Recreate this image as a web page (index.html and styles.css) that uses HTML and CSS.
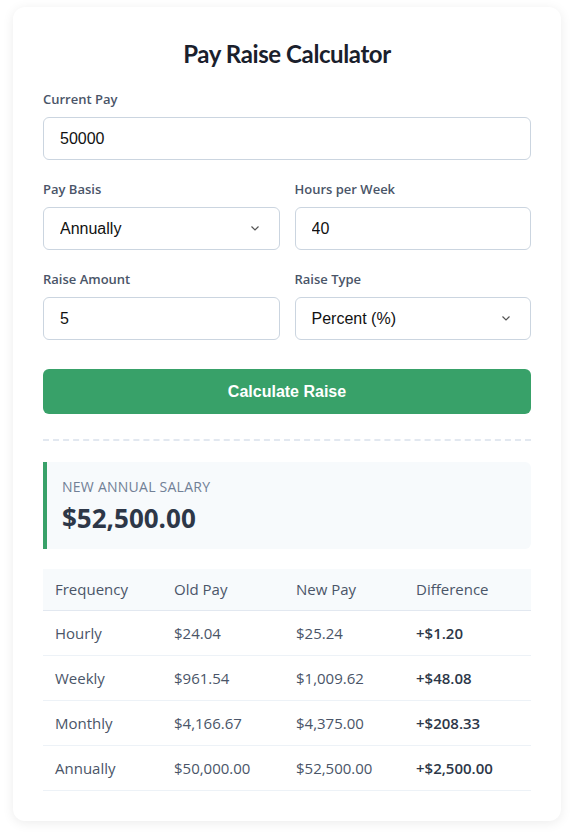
FILE: index.html
```html
<!DOCTYPE html>
<html lang="en">
<head>
<meta charset="utf-8">
<title>Pay Raise Calculator</title>
<link rel="stylesheet" href="styles.css">
</head>
<body>
<main class="card">
  <h1 class="title">Pay Raise Calculator</h1>

  <div class="field">
    <label class="label" for="pay">Current Pay</label>
    <input class="control" id="pay" type="text" value="50000">
  </div>

  <div class="row">
    <div class="field">
      <label class="label" for="basis">Pay Basis</label>
      <div class="select-wrap">
        <select class="control select" id="basis">
          <option>Annually</option>
        </select>
        <svg class="chevron" width="8" height="5" viewBox="0 0 8 5"><path d="M0.5 0.5 L4 4 L7.5 0.5" fill="none" stroke="#555" stroke-width="1.2"/></svg>
      </div>
    </div>
    <div class="field">
      <label class="label" for="hours">Hours per Week</label>
      <input class="control" id="hours" type="text" value="40">
    </div>
  </div>

  <div class="row">
    <div class="field">
      <label class="label" for="raise">Raise Amount</label>
      <input class="control" id="raise" type="text" value="5">
    </div>
    <div class="field">
      <label class="label" for="type">Raise Type</label>
      <div class="select-wrap">
        <select class="control select" id="type">
          <option>Percent (%)</option>
        </select>
        <svg class="chevron" width="8" height="5" viewBox="0 0 8 5"><path d="M0.5 0.5 L4 4 L7.5 0.5" fill="none" stroke="#555" stroke-width="1.2"/></svg>
      </div>
    </div>
  </div>

  <button class="btn" type="button">Calculate Raise</button>

  <section class="results">
    <div class="summary">
      <div class="summary-label">New Annual Salary</div>
      <div class="summary-value">$52,500.00</div>
    </div>

    <table class="breakdown">
      <colgroup>
        <col class="col-freq">
        <col class="col-old">
        <col class="col-new">
        <col>
      </colgroup>
      <thead>
        <tr><th>Frequency</th><th>Old Pay</th><th>New Pay</th><th>Difference</th></tr>
      </thead>
      <tbody>
        <tr><td>Hourly</td><td>$24.04</td><td>$25.24</td><td class="diff">+$1.20</td></tr>
        <tr><td>Weekly</td><td>$961.54</td><td>$1,009.62</td><td class="diff">+$48.08</td></tr>
        <tr><td>Monthly</td><td>$4,166.67</td><td>$4,375.00</td><td class="diff">+$208.33</td></tr>
        <tr><td>Annually</td><td>$50,000.00</td><td>$52,500.00</td><td class="diff">+$2,500.00</td></tr>
      </tbody>
    </table>
  </section>
</main>
</body>
</html>
```

FILE: styles.css
```css
* {
  box-sizing: border-box;
}

body {
  margin: 0;
  padding: 7px 15px 15px 13px;
  background: #ffffff;
  font-family: "Open Sans", "Noto Sans", sans-serif;
  color: #2d3748;
}

.card {
  width: 548px;
  background: #fff;
  border-radius: 12px;
  box-shadow: 0 2px 12px rgba(0, 0, 0, 0.08);
  padding: 30px;
}

.title {
  margin: 0 0 20px;
  text-align: center;
  font-family: Lato, "Open Sans", sans-serif;
  font-size: 24px;
  line-height: 33px;
  font-weight: 700;
  letter-spacing: -0.4px;
  color: #1a202c;
}

.field {
  margin-bottom: 20px;
  min-width: 0;
}

.label {
  display: block;
  font-size: 13px;
  line-height: 18px;
  font-weight: 600;
  color: #4a5568;
  margin-bottom: 9px;
}

.row {
  display: grid;
  grid-template-columns: 1fr 1fr;
  column-gap: 15px;
}

.control {
  display: block;
  width: 100%;
  height: 43px;
  padding: 0 16px;
  border: 1px solid #cbd5e0;
  border-radius: 6px;
  background: #fff;
  font-family: "Liberation Sans", Arial, sans-serif;
  font-size: 16px;
  color: #111;
}

.select-wrap {
  position: relative;
}

.select {
  appearance: none;
  -webkit-appearance: none;
}

.chevron {
  position: absolute;
  right: 21px;
  top: 19px;
  pointer-events: none;
}

.btn {
  display: block;
  width: 100%;
  height: 45px;
  margin-top: 9px;
  border: 0;
  border-radius: 6px;
  background: #38a169;
  color: #fff;
  font-family: "Liberation Sans", Arial, sans-serif;
  font-size: 16px;
  font-weight: 700;
}

.results {
  margin-top: 25px;
  border-top: 2px dashed #e2e8f0;
  padding-top: 21px;
}

.summary {
  background: #f7fafc;
  border-left: 4px solid #38a169;
  border-radius: 0 6px 6px 0;
  padding: 15px;
  margin-bottom: 20px;
}

.summary-label {
  font-size: 14px;
  line-height: 20px;
  letter-spacing: 0.25px;
  text-transform: uppercase;
  color: #718096;
  margin-bottom: 5px;
}

.summary-value {
  font-size: 26px;
  line-height: 32px;
  font-weight: 700;
  color: #2d3748;
}

.breakdown {
  width: 100%;
  border-collapse: collapse;
  font-size: 15px;
}

.col-freq {
  width: 119px;
}

.col-old {
  width: 122px;
}

.col-new {
  width: 120px;
}

.breakdown th {
  text-align: left;
  font-weight: 500;
  color: #4a5568;
  background: #f7fafc;
  padding: 10px 12px 11px;
  line-height: 20px;
  border-bottom: 1px solid #e2e8f0;
}

.breakdown td {
  padding: 12px;
  line-height: 20px;
  color: #4a5568;
  border-bottom: 1px solid #edf2f7;
}

.breakdown td.diff {
  font-weight: 600;
  color: #2d3748;
}
```
